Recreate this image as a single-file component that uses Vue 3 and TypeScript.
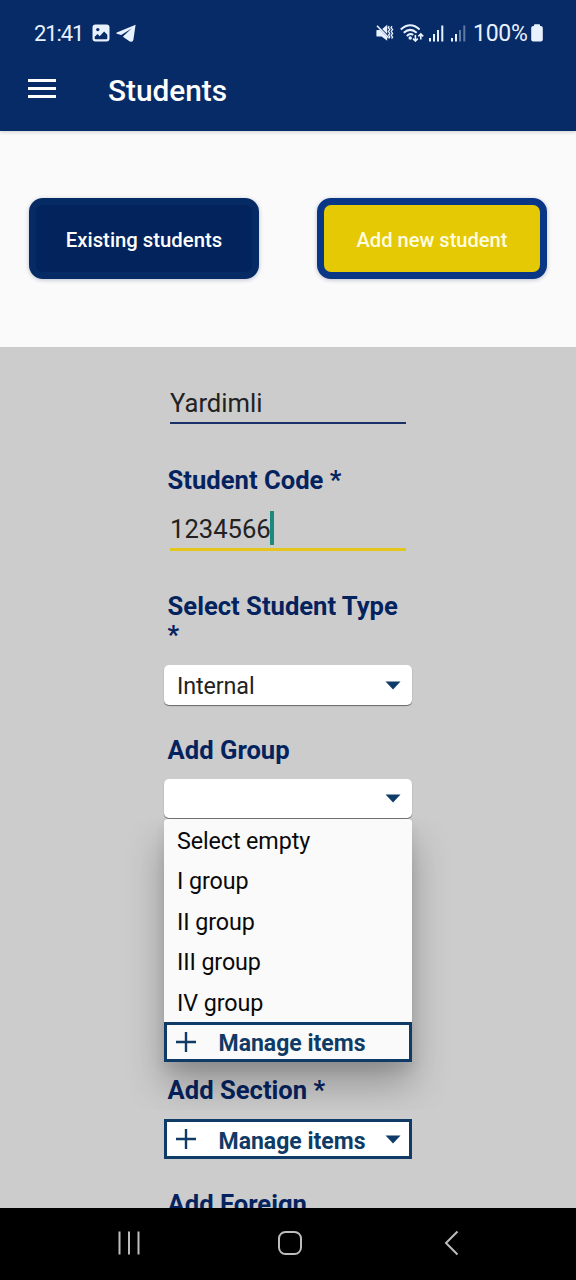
<script setup lang="ts">
import { ref } from 'vue'

const studentType = ref('Internal')
const groups: string[] = ['Select empty', 'I group', 'II group', 'III group', 'IV group']
</script>

<template>
  <div class="screen">
    <header class="header">
      <div class="status">
        <span class="clock">21:41</span>
        <svg class="photo" width="18" height="18" viewBox="0 0 18 18">
          <path fill-rule="evenodd" d="M3.5 0.5h11a3 3 0 0 1 3 3v11a3 3 0 0 1-3 3h-11a3 3 0 0 1-3-3v-11a3 3 0 0 1 3-3zM5.8 3.9a1.7 1.7 0 1 0 0 3.4a1.7 1.7 0 1 0 0-3.4zM2.7 12.8v1.5q0 1 1 1h10.6q1 0 1-1v-3.6l-3.2-3.2-4.4 4.8-2.2-2.2z" />
        </svg>
        <svg class="plane" width="20" height="18" viewBox="0 0 20 18">
          <path d="M19.6 0.8L0.8 8.6q-1 .6.1 1.1l4.3 1.3L15.6 4.4 7.2 12.2v.9l6.6 4.3q3 1.2 3.6-1.6z" />
        </svg>
        <span class="spacer"></span>
        <svg class="mute" width="18" height="18" viewBox="0 0 18 18">
          <path d="M1 6h3.2l7 7.2v3.6L5.6 12.4H1q-.6 0-.6-.6V6.6q0-.6.6-.6zM6.2 4.9L11.2.8v9.3z" />
          <path class="stroke" d="M1 1.8L12.6 13.8" />
          <path class="stroke thin" d="M13.2 2.2l-1 1.6 1.6 1.8-1.4 1.9 1.4 1.9-1.2 1.7 1.2 1.8-1 1.6M16 2.2l-1 1.6 1.6 1.8-1.4 1.9 1.4 1.9-1.4 1.9 1.4 1.8-1 1.6" />
        </svg>
        <svg class="wifi" width="24" height="18" viewBox="0 0 24 18">
          <path class="wave" d="M.8 5.4Q10.2-2.8 19.6 5.4M3.7 8.8Q10.2 3 16.7 8.8M6.8 11.9Q10.2 8.8 13.2 11" />
          <circle cx="10.2" cy="14" r="1.7" />
          <path class="stroke" d="M15.4 11v6M13 14.6l2.4 2.4 2.4-2.4M20.8 15.6v-5.4M18.4 12.4l2.4-2.4 2.4 2.4" />
        </svg>
        <svg class="bars" width="15" height="17" viewBox="0 0 15 17">
          <path d="M0 13h2v3.5H0zM4 9h2v7.5H4zM8 5h2v11.5H8zM12.3 .5h2v16h-2z" />
        </svg>
        <svg class="bars second" width="15" height="17" viewBox="0 0 15 17">
          <path d="M0 13h2v3.5H0zM4 9h2v7.5H4z" />
          <path opacity=".4" d="M8 5h2v11.5H8zM12.3 .5h2v16h-2z" />
        </svg>
        <span class="percent">100%</span>
        <svg class="battery" width="12" height="18" viewBox="0 0 12 18">
          <path d="M3 2V1q0-.7.7-.7h4.6q.7 0 .7.7V2h.8a2 2 0 0 1 2 2v11.4a2 2 0 0 1-2 2H2.2a2 2 0 0 1-2-2V4a2 2 0 0 1 2-2z" />
        </svg>
      </div>
      <div class="toolbar">
        <button class="menu-button" aria-label="Menu"><i></i><i></i><i></i></button>
        <h1>Students</h1>
      </div>
    </header>

    <nav class="tabs">
      <button class="tab">Existing students</button>
      <button class="tab active">Add new student</button>
    </nav>

    <main class="form">
      <div class="field city"><span>Yardimli</span></div>
      <label class="label code-label">Student Code *</label>
      <div class="field code"><span>1234566</span><i class="caret"></i></div>
      <label class="label type-label">Select Student Type *</label>
      <div class="select">
        <span>{{ studentType }}</span>
        <svg class="arrow" width="16" height="9" viewBox="0 0 16 9"><path d="M.5.5h15L8 8.5z" /></svg>
      </div>
      <label class="label group-label">Add Group</label>
      <div class="select open">
        <span></span>
        <svg class="arrow" width="16" height="9" viewBox="0 0 16 9"><path d="M.5.5h15L8 8.5z" /></svg>
        <div class="menu">
          <div v-for="g in groups" :key="g" class="option">{{ g }}</div>
          <div class="manage">
            <svg class="plus" width="22" height="22" viewBox="0 0 22 22"><path d="M11 1v20M1 11h20" /></svg>
            <span>Manage items</span>
          </div>
        </div>
      </div>
      <label class="label section-label">Add Section *</label>
      <div class="manage solid">
        <svg class="plus" width="22" height="22" viewBox="0 0 22 22"><path d="M11 1v20M1 11h20" /></svg>
        <span>Manage items</span>
        <svg class="arrow" width="16" height="9" viewBox="0 0 16 9"><path d="M.5.5h15L8 8.5z" /></svg>
      </div>
      <label class="label foreign-label">Add Foreign</label>
    </main>

    <footer class="navbar">
      <svg width="24" height="24" viewBox="0 0 24 24"><path d="M2.5 .5v23M12 .5v23M21.5 .5v23" /></svg>
      <svg width="26" height="26" viewBox="0 0 26 26"><rect x="2" y="2" width="22" height="22" rx="6.5" /></svg>
      <svg width="24" height="26" viewBox="0 0 24 26"><path d="M18.5 1.5L7 13l11.5 11.5" /></svg>
    </footer>
  </div>
</template>

<style>
body {
  margin: 0;
}
</style>

<style scoped>
.screen {
  width: 576px;
  height: 1280px;
  display: flex;
  flex-direction: column;
  overflow: hidden;
  background: #fafafa;
  font-family: Roboto, "Liberation Sans", sans-serif;
}
button {
  font-family: inherit;
  padding: 0;
}
.header {
  height: 131px;
  flex: none;
  box-sizing: border-box;
  background: #072b66;
  color: #fff;
  box-shadow: 0 1px 4px rgba(0, 0, 0, 0.18);
}
.status {
  height: 66px;
  display: flex;
  align-items: center;
  padding: 0 33px 0 34px;
  color: #e8f1ff;
  font-size: 22px;
}
.status svg {
  fill: #e8f1ff;
  flex: none;
}
.status .stroke {
  fill: none;
  stroke: #e8f1ff;
  stroke-width: 1.6;
}
.status .thin {
  stroke-width: 1.3;
}
.status .wave {
  fill: none;
  stroke: #e8f1ff;
  stroke-width: 2;
}
.clock {
  width: 57px;
  letter-spacing: -1.1px;
}
.photo {
  margin-left: 0.5px;
}
.plane {
  margin-left: 6px;
}
.spacer {
  flex: 1;
}
.wifi {
  margin-left: 6px;
}
.bars {
  margin-left: 5px;
}
.bars.second {
  margin-left: 7px;
}
.percent {
  width: 58px;
  margin-left: 7px;
  font-size: 23px;
  letter-spacing: -0.3px;
}
.toolbar {
  height: 48px;
  display: flex;
  align-items: center;
  padding-left: 28px;
}
.menu-button {
  width: 28px;
  height: 19px;
  display: flex;
  flex-direction: column;
  justify-content: space-between;
  border: 0;
  background: none;
  margin-bottom: 3px;
}
.menu-button i {
  display: block;
  width: 28px;
  height: 3px;
  background: #fff;
}
h1 {
  margin: 2px 0 0 52px;
  font-size: 29.8px;
  line-height: 48px;
  font-weight: 500;
}
.tabs {
  height: 216px;
  flex: none;
  box-sizing: border-box;
  padding: 67.4px 29px 0;
  display: flex;
  justify-content: space-between;
}
.tab {
  width: 230px;
  height: 81px;
  border: 7px solid #062a64;
  border-radius: 14px;
  background: #02235c;
  color: #fff;
  font-size: 20.3px;
  font-weight: 500;
  padding-top: 2px;
  box-shadow: 0 1px 4px rgba(0, 20, 90, 0.25);
}
.tab.active {
  border-color: #0a3785;
  background: #e5c904;
  color: #fffde0;
  font-size: 20.1px;
}
.form {
  height: 861px;
  flex: none;
  box-sizing: border-box;
  overflow: hidden;
  padding: 36px 164px 0;
  background: #ccc;
}
.field {
  box-sizing: border-box;
  margin: 0 6px;
  display: flex;
  align-items: center;
  font-size: 25.6px;
  color: #222;
}
.city {
  height: 41px;
  border-bottom: 2px solid #1b2f68;
}
.code {
  height: 43px;
  margin-top: 13px;
  border-bottom: 3px solid #e5c71b;
}
.code span {
  padding-top: 2px;
}
.caret {
  width: 4px;
  height: 34px;
  margin-left: -1px;
  background: #1a8a7c;
}
.label {
  display: block;
  margin-left: 3.6px;
  font-size: 25.6px;
  line-height: 29px;
  font-weight: 700;
  color: #04235e;
}
.code-label {
  margin-top: 42px;
}
.type-label {
  margin-top: 41px;
  height: 58px;
}
.group-label {
  margin-top: 31px;
}
.section-label {
  margin-top: 258px;
}
.foreign-label {
  margin-top: 31px;
}
.select {
  position: relative;
  box-sizing: border-box;
  height: 40px;
  margin-top: 15px;
  padding: 0 11px 0 13px;
  display: flex;
  align-items: center;
  justify-content: space-between;
  border-radius: 5px;
  background: #fff;
  box-shadow: 0 1px 1px rgba(0, 0, 0, 0.5);
  font-size: 23.3px;
  letter-spacing: -0.1px;
  color: #222;
}
.select > span {
  padding-top: 2px;
}
.select.open {
  height: 39px;
  margin-top: 14px;
}
.arrow {
  fill: #0f3b69;
}
.menu {
  position: absolute;
  left: 0;
  top: 40px;
  width: 248px;
  height: 243px;
  border-radius: 4px 4px 0 0;
  background: #fafafa;
  box-shadow: 0 22px 38px rgba(0, 0, 0, 0.28), 0 8px 12px rgba(0, 0, 0, 0.08);
  clip-path: inset(0 -60px -48px -60px);
  padding-top: 1px;
  box-sizing: border-box;
}
.option {
  height: 40.4px;
  line-height: 42px;
  padding-left: 13px;
  color: #0a0a0a;
}
.manage {
  box-sizing: border-box;
  height: 40px;
  border: 3px solid #0f3b66;
  background: #fafafa;
  display: flex;
  align-items: center;
  padding: 0 8px 0 7.5px;
  color: #0f3b66;
  font-size: 23px;
  letter-spacing: 0;
  font-weight: 700;
}
.manage span {
  padding-top: 4px;
}
.manage.solid {
  background: #fff;
  margin-top: 14px;
}
.manage .plus {
  fill: none;
  stroke: #0f3b66;
  stroke-width: 2.4;
  margin-right: 22px;
}
.manage .arrow {
  margin-left: auto;
}
.navbar {
  height: 72px;
  flex: none;
  background: #000;
  display: flex;
  align-items: center;
  justify-content: space-between;
  padding: 0 113px 3px 117px;
  box-sizing: border-box;
}
.navbar svg {
  fill: none;
  stroke: #bdbdbd;
  stroke-width: 2;
}
</style>
